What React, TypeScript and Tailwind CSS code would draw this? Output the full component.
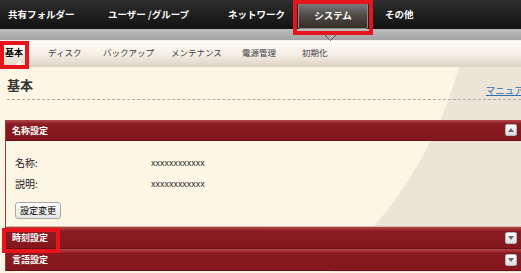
import React from "react";

const font = { fontFamily: '"Noto Sans CJK JP", "Noto Sans", sans-serif' };

function ToggleBtn({ up }: { up?: boolean }) {
  return (
    <div className="w-[12px] h-[12px] rounded-[2px] bg-gradient-to-b from-white to-[#dcdcdc] border border-[#b8b8b8] flex items-center justify-center">
      <svg width="6" height="4" viewBox="0 0 6 4">
        {up ? <polygon points="0,4 6,4 3,0" fill="#666" /> : <polygon points="0,0 6,0 3,4" fill="#666" />}
      </svg>
    </div>
  );
}

function RedHeader({ title, up, h }: { title: string; up?: boolean; h: string }) {
  return (
    <div className={`${h} flex items-center justify-between pl-[6px] pr-[4px] bg-gradient-to-b from-[#b4474a] via-[#8a1a21] via-[20%] to-[#83171d] border-b border-[#6a1015]`}>
      <span className="text-white font-bold text-[9px] leading-none">{title}</span>
      <ToggleBtn up={up} />
    </div>
  );
}

export default function App() {
  const tabs = [
    { t: "ディスク", w: "w-[55px]" },
    { t: "バックアップ", w: "w-[68px]" },
    { t: "メンテナンス", w: "w-[71px]" },
    { t: "電源管理", w: "w-[60px]" },
    { t: "初期化", w: "w-[60px]" },
  ];
  return (
    <div className="relative w-[521px] h-[273px] overflow-hidden bg-[#fdf6e5]" style={font}>
      {/* top nav */}
      <div className="h-[29px] bg-gradient-to-b from-[#2e2e2e] to-[#121212] flex items-center text-white font-bold text-[9.5px] leading-none">
        <span className="ml-[8px] w-[100px]">共有フォルダー</span>
        <span className="w-[120px]">ユーザー /グループ</span>
        <span className="w-[70px]">ネットワーク</span>
        <div className="h-[26px] w-[70px] mt-[2px] rounded-[2px] border border-[#8a8a86] bg-gradient-to-b from-[#78787a] via-[#4e4a43] to-[#332d25] flex items-center justify-center">
          システム
        </div>
        <span className="ml-[17px]">その他</span>
      </div>
      {/* gray band */}
      <div className="relative h-[12px] bg-gradient-to-b from-[#bdbdbd] to-[#a3a3a3] border-b border-[#f4f0ea]">
        <svg className="absolute left-[324px] top-[5px]" width="13" height="7" viewBox="0 0 13 7">
          <polygon points="0.5,0.5 12.5,0.5 6.5,6.5" fill="#b0b0b0" stroke="#555" strokeWidth="1" />
        </svg>
      </div>
      {/* sub nav */}
      <div className="relative h-[26px] bg-gradient-to-b from-[#fefcf8] via-[#f6efe6] to-[#ded2c2] flex items-start pt-[7px] text-[8.5px] leading-none text-[#333]">
        <span className="ml-[5px] w-[43px] font-bold text-black text-[9px]">基本</span>
        {tabs.map((x) => (
          <span key={x.t} className={`${x.w} text-[#3a3a3a]`}>{x.t}</span>
        ))}
        <svg className="absolute left-[14px] bottom-0" width="11" height="6" viewBox="0 0 11 6">
          <polygon points="0,6 11,6 5.5,0" fill="#fdf6e5" />
        </svg>
      </div>
      {/* content */}
      <div
        className="relative h-[205px] bg-[#fdf6e5]"
        style={{ background: "radial-gradient(ellipse 473px 426px at 0px -100px, #fdf6e5 99.6%, #ebe4d7 100%)" }}
      >
        <div className="flex items-end justify-between pl-[7px] pt-[11px] pr-0">
          <span className="text-[13px] font-bold text-[#333] leading-none">基本</span>
          <span className="text-[9.5px] text-[#2f6db5] underline leading-none mr-[-12px] mb-[-4px]">マニュアル</span>
        </div>
        <div className="ml-[7px] mt-[8px] border-t border-dashed border-[#b0aba3]" />
        <div className="ml-[5px] mt-[20px] border-l border-[#9c3a3c]">
          <RedHeader title="名称設定" up h="h-[21px]" />
          <div className="h-[86px] pl-[9px] pt-[11px] text-[10px] text-[#222] leading-none border-b border-[#d8b9a8]">
            <div className="flex h-[21px] items-center">
              <span className="w-[136px]">名称:</span>
              <span className="text-[9px] text-[#333]">xxxxxxxxxxxx</span>
            </div>
            <div className="flex h-[21px] items-center">
              <span className="w-[136px]">説明:</span>
              <span className="text-[9px] text-[#333]">xxxxxxxxxxxx</span>
            </div>
            <div className="mt-[8px] w-[46px] h-[17px] rounded-[3px] border border-[#a8a8a8] bg-gradient-to-b from-white to-[#e6e6e6] flex items-center justify-center text-[9px] text-black">
              設定変更
            </div>
          </div>
          <RedHeader title="時刻設定" h="h-[22px]" />
          <RedHeader title="言語設定" h="h-[22px]" />
        </div>
      </div>
      {/* annotation boxes */}
      <div className="absolute left-[293px] top-0 w-[80px] h-[35px] border-[4px] border-[#e8141c]" />
      <div className="absolute left-0 top-[41px] w-[29px] h-[28px] border-[4px] border-[#e8141c]" />
      <div className="absolute left-[2px] top-[228px] w-[58px] h-[25px] border-[4px] border-[#e8141c]" />
    </div>
  );
}
